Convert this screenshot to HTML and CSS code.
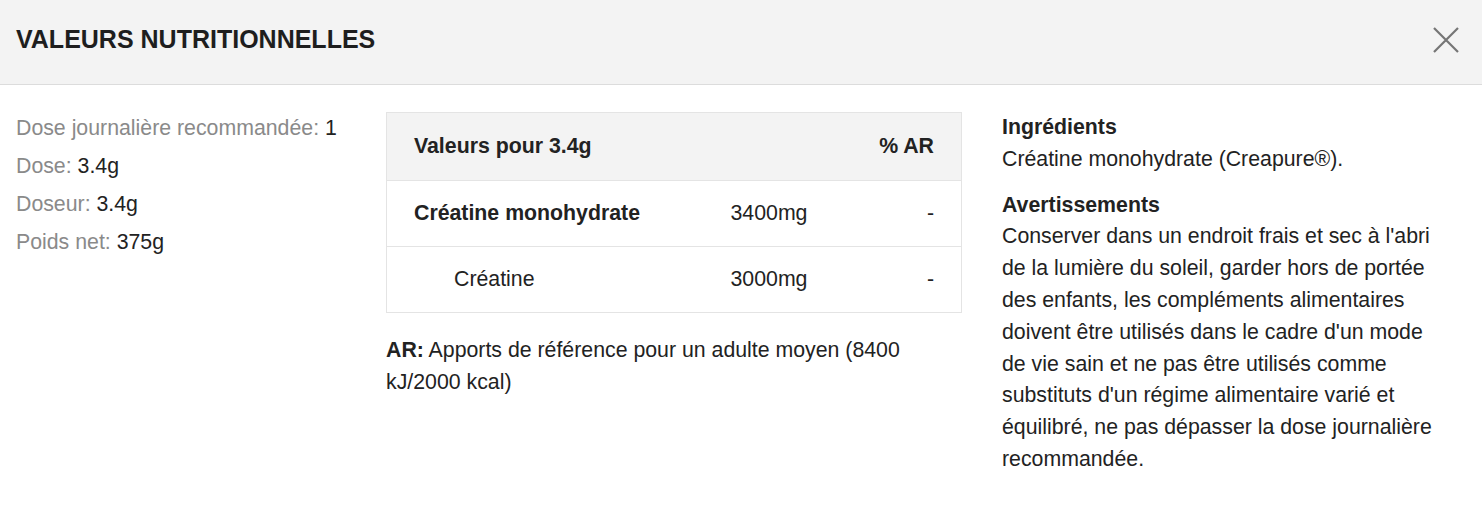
FILE: index.html
```html
<!DOCTYPE html>
<html lang="fr">
<head>
  <meta charset="UTF-8" />
  <meta name="viewport" content="width=device-width, initial-scale=1.0"/>
  <title>Valeurs nutritionnelles</title>
  <link rel="stylesheet" href="styles.css">
</head>
<body>

<div class="entete">
  <h1>Valeurs nutritionnelles</h1>
  <button class="fermer" aria-label="Fermer">
    <svg width="26" height="26" viewBox="0 0 26 26">
      <path d="M1 1 L25 25 M25 1 L1 25" stroke="#757575" stroke-width="2.2" fill="none"/>
    </svg>
  </button>
</div>

<div class="contenu">
  <ul class="infos">
    <li><span class="libelle">Dose journalière recommandée:</span> 1</li>
    <li><span class="libelle">Dose:</span> 3.4g</li>
    <li><span class="libelle">Doseur:</span> 3.4g</li>
    <li><span class="libelle">Poids net:</span> 375g</li>
  </ul>

  <div class="milieu">
    <table class="valeurs">
      <colgroup>
        <col class="col-nom">
        <col class="col-qte">
        <col>
      </colgroup>
      <thead>
        <tr>
          <th>Valeurs pour 3.4g</th>
          <th></th>
          <th class="droite">% AR</th>
        </tr>
      </thead>
      <tbody>
        <tr>
          <td class="gras">Créatine monohydrate</td>
          <td>3400mg</td>
          <td class="droite">-</td>
        </tr>
        <tr>
          <td class="retrait">Créatine</td>
          <td>3000mg</td>
          <td class="droite">-</td>
        </tr>
      </tbody>
    </table>
    <p class="note"><b>AR:</b> Apports de référence pour un adulte moyen (8400 kJ/2000 kcal)</p>
  </div>

  <div class="details">
    <h3>Ingrédients</h3>
    <p>Créatine monohydrate (Creapure®).</p>
    <h3>Avertissements</h3>
    <p>Conserver dans un endroit frais et sec à l'abri de la lumière du soleil, garder hors de portée des enfants, les compléments alimentaires doivent être utilisés dans le cadre d'un mode de vie sain et ne pas être utilisés comme substituts d'un régime alimentaire varié et équilibré, ne pas dépasser la dose journalière recommandée.</p>
  </div>
</div>

</body>
</html>
```

FILE: styles.css
```css
body {
  margin: 0;
  font-family: "Liberation Sans", Arial, sans-serif;
  font-size: 21.3px;
  color: #222;
  background: #fff;
}
.entete {
  height: 84px;
  display: flex;
  align-items: center;
  justify-content: space-between;
  padding: 0 16px;
  background: #f3f3f3;
  border-bottom: 1px solid #dcdcdc;
}
.entete h1 {
  margin: 0;
  font-size: 25px;
  text-transform: uppercase;
  color: #1e1e1e;
  padding-bottom: 6px;
}
.fermer {
  border: none;
  background: none;
  padding: 0;
  margin-right: 7px;
  margin-top: -4px;
  cursor: pointer;
  display: flex;
}
.contenu {
  display: grid;
  grid-template-columns: 354px 576px 456px;
  column-gap: 16px;
  padding: 27px 16px 0;
}
.infos {
  list-style: none;
  margin: 0;
  padding: 0;
}
.infos li {
  line-height: 32px;
  margin-bottom: 6px;
  white-space: nowrap;
}
.libelle {
  color: #8a8a8a;
}
.valeurs {
  width: 100%;
  table-layout: fixed;
  border-collapse: collapse;
  border: 1px solid #e4e4e4;
}
.col-nom {
  width: 344px;
}
.col-qte {
  width: 110px;
}
.valeurs th {
  background: #f3f3f3;
  text-align: left;
  padding: 20px 27px;
  line-height: 27px;
  font-weight: bold;
  white-space: nowrap;
}
.valeurs td {
  border-top: 1px solid #e4e4e4;
  padding: 19px 27px;
  line-height: 27px;
  white-space: nowrap;
}
.valeurs th:nth-child(2), .valeurs td:nth-child(2) {
  padding-left: 0;
  padding-right: 0;
}
.valeurs .droite {
  text-align: right;
}
.valeurs .gras {
  font-weight: bold;
}
.valeurs .retrait {
  padding-left: 67px;
}
.note {
  margin: 22px 0 0;
  line-height: 31.5px;
}
.details {
  margin-left: 24px;
  line-height: 31.8px;
}
.details h3 {
  margin: 0;
  font-size: 21.3px;
}
.details p {
  margin: 0 0 14px;
}
```
